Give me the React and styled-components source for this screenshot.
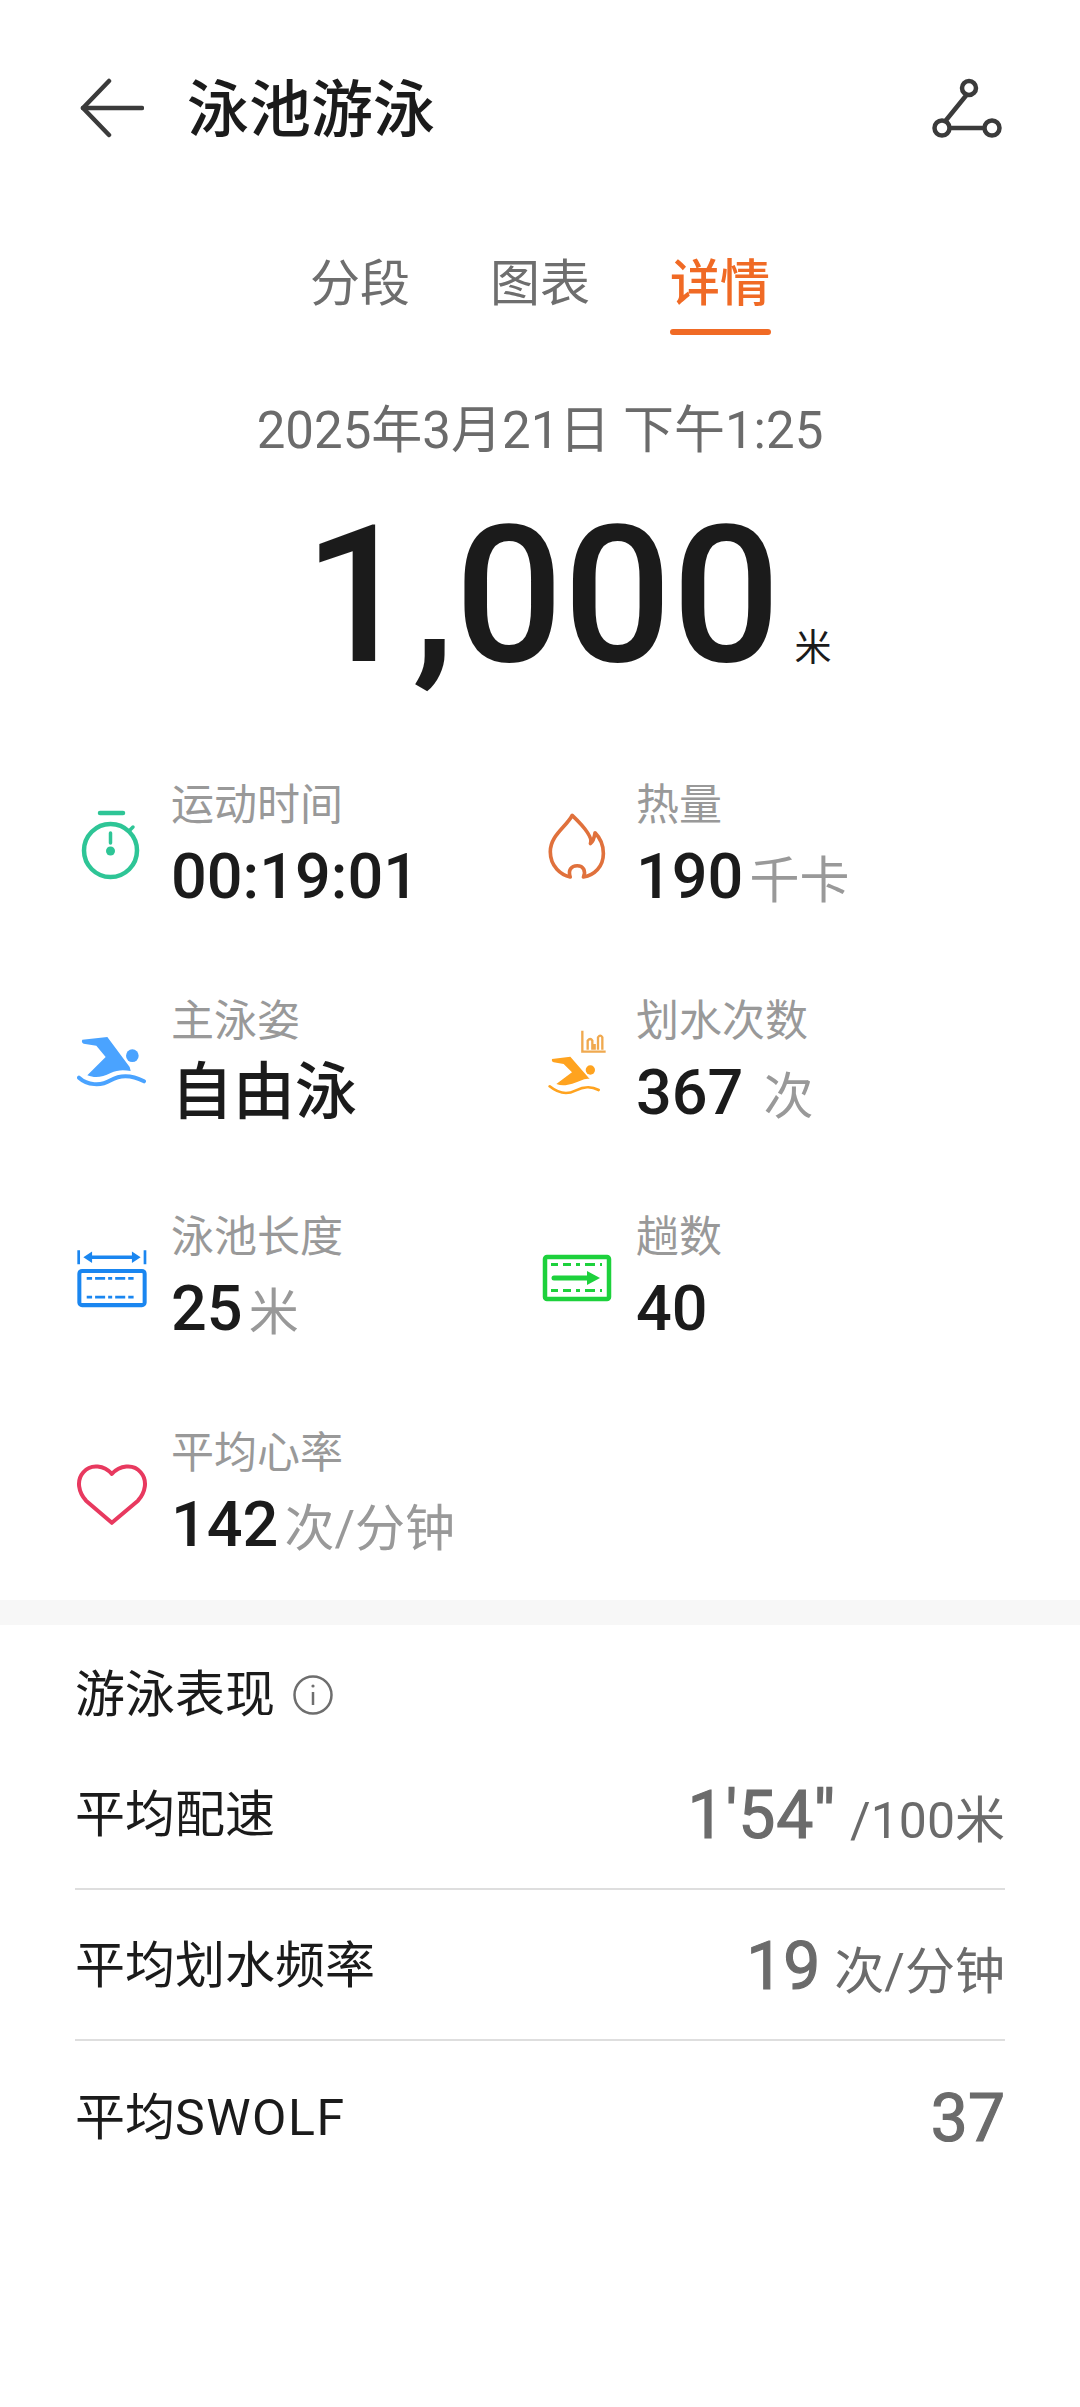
import React from "react";
import styled, { createGlobalStyle } from "styled-components";

const Global = createGlobalStyle`
  html, body { margin: 0; padding: 0; background: #fff; }
  body { font-family: Roboto, "Noto Sans CJK SC", sans-serif; color: #1b1b1b; }
  * { box-sizing: border-box; }
`;
const Page = styled.div`width: 1080px; height: 2407px; background: #fff; overflow: hidden;`;
const Header = styled.header`
  height: 216px; padding: 0 78px 0 80px; display: flex; align-items: center; gap: 46px;
`;
const Title = styled.h1`margin: 0 0 0 -3px; padding-top: 6px; flex: 1; font-size: 62px; line-height: 70px; font-weight: 500; color: #1b1b1b;`;
const Tabs = styled.nav`
  display: flex; justify-content: center; gap: 80px; height: 120px;
`;
const Tab = styled.div`
  position: relative; font-size: 50px; line-height: 56px; height: 119px; padding-top: 40px; font-weight: ${p => p.$active ? 500 : 400};
  color: ${p => p.$active ? "#f06a25" : "#6e6e6e"};
  &::after {
    content: ""; display: ${p => p.$active ? "block" : "none"}; position: absolute; left: 0; right: -1px; top: 113px; height: 6px;
    border-radius: 3px; background: #f06a25;
  }
`;
const DateLine = styled.div`
  text-align: center; font-size: 51px; line-height: 56px; color: #6b6b6b; margin-top: 67px;
`;
const Hero = styled.div`
  display: flex; justify-content: center; align-items: baseline; height: 224px; margin-top: 25px; padding-left: 55px;
`;
const HeroNum = styled.span`font-size: 191px; line-height: 224px; font-weight: 500; color: #1b1b1b;`;
const HeroUnit = styled.span`font-size: 37px; margin-left: 14px; color: #1b1b1b;`;
const Stats = styled.section`
  display: grid; grid-template-columns: 465px 1fr; grid-auto-rows: 132px; row-gap: 84px; padding: 0 0 0 76px; margin-top: 72px;
`;
const Stat = styled.div`display: flex; gap: 23px; align-items: center; height: 132px;`;
const IconSlot = styled.div`width: 72px; display: flex; justify-content: center; align-items: center; flex: none;`;
const StatText = styled.div`display: flex; flex-direction: column; gap: 12px;`;
const StatLabel = styled.div`font-size: 43px; line-height: 50px; color: #999;`;
const StatValue = styled.div`display: flex; align-items: baseline; height: 70px; line-height: 70px;`;
const Num = styled.span`font-size: 63px; font-weight: 500; color: #1b1b1b;`;
const Cjk = styled.span`font-size: 62px; font-weight: 500; color: #1b1b1b;`;
const Unit = styled.span`font-size: 50px; color: #999; margin-left: ${p => p.$gap || 6}px;`;
const Band = styled.div`height: 25px; background: #f7f7f7; margin-top: 40px;`;
const Perf = styled.section`padding: 0 75px;`;
const PerfHead = styled.div`display: flex; align-items: center; gap: 18px; height: 70px; margin-top: 35px; font-size: 50px; line-height: 70px; color: #1b1b1b;`;
const Rows = styled.div`margin-top: 9px;`;
const Row = styled.div`
  display: flex; justify-content: space-between; align-items: center; height: 151px;
  border-bottom: ${p => p.$last ? "none" : "2px solid #dedede"};
`;
const RowLabel = styled.div`font-size: 50px; line-height: 60px; padding-top: 2px; color: #1b1b1b;`;
const Latin = styled.span`letter-spacing: 1.5px;`;
const RowValue = styled.div`display: flex; align-items: baseline; padding-top: 4px; color: #6b6b6b;`;
const RowNum = styled.span`
  font-size: 66px; font-weight: 400; line-height: 70px; -webkit-text-stroke: 1.2px #6b6b6b;
  letter-spacing: ${p => p.$spaced ? "1px" : "0"};
`;
const RowUnit = styled.span`font-size: 50px; margin-left: 14px;`;

const Back = () => (
  <svg width="64" height="60" viewBox="0 0 64 60" fill="none" stroke="#3b3b3b" strokeWidth="4.5" strokeLinecap="round" strokeLinejoin="round">
    <path d="M3 30H62" /><path d="M29 3L3 30L29 57" />
  </svg>
);
const Share = () => (
  <svg width="70" height="62" viewBox="0 0 70 62" fill="none" stroke="#3b3b3b" strokeWidth="4.5">
    <circle cx="37" cy="11" r="7" /><circle cx="10" cy="51" r="7.5" /><circle cx="60" cy="51" r="7.5" />
    <path d="M34.5 18L13 44.5M17.5 51H52.5" />
  </svg>
);
const Timer = () => (
  <svg width="72" height="72" viewBox="0 0 72 72" fill="none" stroke="#2ec596">
    <path d="M24 3H47" strokeWidth="4.5" strokeLinecap="round" />
    <circle cx="34.5" cy="40.5" r="26.5" strokeWidth="4.5" />
    <path d="M34.5 23V33" strokeWidth="3.5" strokeLinecap="round" />
    <circle cx="34.5" cy="41" r="4.5" fill="#2ec596" stroke="none" />
    <path d="M53 21L57 17" strokeWidth="3.5" strokeLinecap="round" />
  </svg>
);
const Fire = () => (
  <svg width="62" height="68" viewBox="50 120 185 205" fill="none" stroke="#e0713c" strokeWidth="11" strokeLinejoin="round" strokeLinecap="round">
    <path d="M128 130C110 165 62 190 62 240C62 285 95 310 122 316C115 295 125 282 143 282C162 282 170 298 162 316C195 310 222 285 222 245C222 222 212 198 197 183C195 195 190 210 183 215C190 200 170 170 128 130Z" />
  </svg>
);
const Swim = () => (
  <svg width="70" height="54" viewBox="54 795 210 160" fill="#4aa3ff">
    <path d="M70 808Q66 816 74 820L112 826L140 860L85 915C110 925 130 920 155 908C175 898 195 898 215 902L212 890L145 800Z" />
    <circle cx="220" cy="856" r="19" />
    <path d="M60 922C85 945 125 948 155 930C185 912 215 912 255 933" fill="none" stroke="#4aa3ff" strokeWidth="12" strokeLinecap="round" />
  </svg>
);
const Strokes = () => (
  <svg width="60" height="66" viewBox="50 770 180 198" fill="none">
    <path d="M65 860Q63 868 70 870L100 875L125 900L78 935C105 945 130 932 150 925C160 921 170 918 178 920L120 853Z" fill="#ffa31f" />
    <circle cx="180" cy="893" r="14" fill="#ffa31f" />
    <path d="M58 942C90 968 115 965 135 955C160 943 180 940 205 953" stroke="#ffa31f" strokeWidth="8" strokeLinecap="round" />
    <path d="M156 775V838H226M172 832V805Q180 795 186 805V832M193 832V815M203 832V795Q210 785 216 795V832" stroke="#f0a94f" strokeWidth="7" />
  </svg>
);
const Pool = () => (
  <svg width="72" height="59" viewBox="50 85 215 175" fill="none" stroke="#1a86f0">
    <path d="M58 88V130M256 88V130" strokeWidth="8" />
    <path d="M90 109H225" strokeWidth="11" />
    <path d="M72 109L98 92V126ZM243 109L217 92V126Z" fill="#1a86f0" stroke="none" />
    <rect x="60" y="150" width="195" height="102" rx="8" strokeWidth="12" />
    <path d="M82 172H234M82 228H234" strokeWidth="8" strokeDasharray="16 9 30 9 12 9 30 9 16" />
  </svg>
);
const Laps = () => (
  <svg width="70" height="48" viewBox="0 0 70 48" fill="none" stroke="#1dd13c">
    <rect x="3" y="3" width="64" height="42" rx="2" strokeWidth="4.5" />
    <path d="M9 10.5H60M9 36.5H60" strokeWidth="3" strokeDasharray="7 5 8 5 4 5 10 5 6" />
    <path d="M12 24H47" strokeWidth="5" strokeLinecap="round" />
    <path d="M58 24L45 17V31Z" fill="#1dd13c" stroke="none" />
  </svg>
);
const Heart = () => (
  <svg width="72" height="63" viewBox="50 728 215 187" fill="none" stroke="#e8395f" strokeWidth="12" strokeLinejoin="round">
    <path d="M157 760C135 735 95 728 72 755C50 780 58 815 80 840L157 906L235 840C257 815 265 780 243 755C220 728 180 735 157 760Z" />
  </svg>
);
const Info = () => (
  <svg width="40" height="40" viewBox="0 0 40 40" fill="none" stroke="#6e6e6e" strokeWidth="2.5">
    <circle cx="20" cy="20" r="18.5" />
    <path d="M20 17V30" /><circle cx="20" cy="11" r="1.6" fill="#6e6e6e" stroke="none" />
  </svg>
);

const stats = [
  { icon: <Timer />, label: "运动时间", value: <Num>00:19:01</Num> },
  { icon: <Fire />, label: "热量", value: <><Num>190</Num><Unit>千卡</Unit></> },
  { icon: <Swim />, label: "主泳姿", value: <Cjk>自由泳</Cjk> },
  { icon: <Strokes />, label: "划水次数", value: <><Num>367</Num><Unit $gap={20}>次</Unit></> },
  { icon: <Pool />, label: "泳池长度", value: <><Num>25</Num><Unit>米</Unit></> },
  { icon: <Laps />, label: "趟数", value: <Num>40</Num> },
  { icon: <Heart />, label: "平均心率", value: <><Num>142</Num><Unit>次/分钟</Unit></> },
];

export default function App() {
  return (
    <Page>
      <Global />
      <Header>
        <Back />
        <Title>泳池游泳</Title>
        <Share />
      </Header>
      <Tabs>
        <Tab>分段</Tab>
        <Tab>图表</Tab>
        <Tab $active>详情</Tab>
      </Tabs>
      <DateLine>2025年3月21日 下午1:25</DateLine>
      <Hero>
        <HeroNum>1,000</HeroNum>
        <HeroUnit>米</HeroUnit>
      </Hero>
      <Stats>
        {stats.map(s => (
          <Stat key={s.label}>
            <IconSlot>{s.icon}</IconSlot>
            <StatText>
              <StatLabel>{s.label}</StatLabel>
              <StatValue>{s.value}</StatValue>
            </StatText>
          </Stat>
        ))}
      </Stats>
      <Band />
      <Perf>
        <PerfHead>游泳表现<Info /></PerfHead>
        <Rows>
          <Row><RowLabel>平均配速</RowLabel><RowValue><RowNum $spaced>1'54''</RowNum><RowUnit>/100米</RowUnit></RowValue></Row>
          <Row><RowLabel>平均划水频率</RowLabel><RowValue><RowNum>19</RowNum><RowUnit>次/分钟</RowUnit></RowValue></Row>
          <Row $last><RowLabel>平均<Latin>SWOLF</Latin></RowLabel><RowValue><RowNum>37</RowNum></RowValue></Row>
        </Rows>
      </Perf>
    </Page>
  );
}
